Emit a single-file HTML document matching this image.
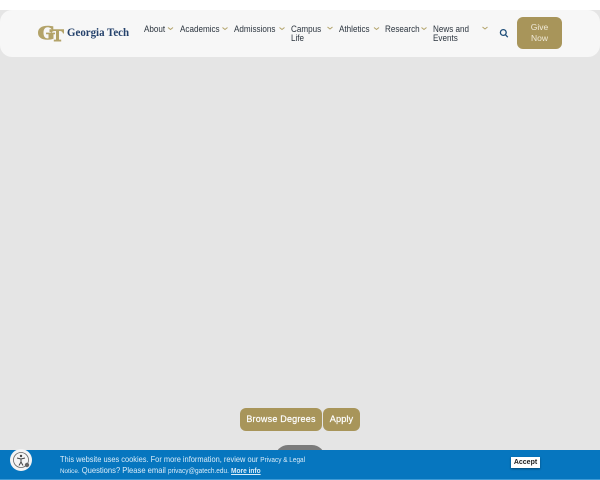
<!DOCTYPE html>
<html><head><meta charset="utf-8">
<style>
html,body{margin:0;padding:0;width:600px;height:480px;overflow:hidden;background:#e5e5e5;font-family:"Liberation Sans",sans-serif}
.a{position:absolute;white-space:nowrap}
#top{left:0;top:0;width:600px;height:10px;background:#fff}
#nav{left:0;top:10px;width:600px;height:47px;background:#f7f7f7;border-radius:12px}
.n{font-size:8.8px;line-height:9px;color:#2a333d;transform:scaleX(.92);transform-origin:left top;filter:blur(.2px)}
.btn{background:#a8955a;color:#fff;border-radius:5px;text-align:center;font-weight:400}
svg{position:absolute;overflow:visible}
</style></head><body>
<div class="a" id="top"></div>
<div class="a" id="nav"></div>

<svg style="left:38px;top:25px;filter:blur(.3px)" width="26" height="17" viewBox="0 0 26 17"><g fill="#b3a369">
<path d="M9.500 0.800C3.500 0.800 0 3.400 0 7.800C0 12.200 3.500 14.800 9.500 14.800C12 14.800 14 14.400 15.500 13.800V9.300H17V7.600H8V9.300H10.500V13.200C10.200 13.400 9.900 13.400 9.500 13.400C7 13.400 5.500 11.400 5.500 7.800C5.500 4.300 7 2.300 9.500 2.300C11.800 2.300 13.300 3.400 14.300 5.400H15.300V1.400C13.800 1.100 11.800 .8 9.500 .8Z"/>
<path d="M11.500 4.200H26V8.500H25C24.500 6.700 23.500 6 21.800 6H21V14.600H23.200V16.500H15.800V14.600H18V6H16.800C15 6 14 6.700 13.500 8H12.800V7H11.500Z"/></g></svg>
<div class="a" style="left:67px;top:25.500px;font-family:'Liberation Serif',serif;font-weight:700;font-size:11.600px;line-height:14px;color:#24416b;transform:scaleX(.94);transform-origin:left top;filter:blur(.2px)">Georgia Tech</div>

<div class="a n" style="left:143.500px;top:24.500px">About</div>
<div class="a n" style="left:179.500px;top:24.500px">Academics</div>
<div class="a n" style="left:234px;top:24.500px">Admissions</div>
<div class="a n" style="left:291px;top:24.500px;line-height:9.500px">Campus<br>Life</div>
<div class="a n" style="left:339px;top:24.500px">Athletics</div>
<div class="a n" style="left:385px;top:24.500px">Research</div>
<div class="a n" style="left:433px;top:24.500px;line-height:9.500px">News and<br>Events</div>

<svg style="left:0;top:0" width="600" height="60"><g fill="none" stroke="#b3a369" stroke-width="1">
<path d="M168 27.500l2.500 2 2.500-2"/><path d="M222.500 27.500l2.500 2 2.500-2"/><path d="M279.500 27.500l2.500 2 2.500-2"/><path d="M327.500 27l2.500 2 2.500-2"/><path d="M374 27.500l2.500 2 2.500-2"/><path d="M421.500 27.500l2.500 2 2.500-2"/><path d="M482.500 27l2.500 2 2.500-2"/></g>
<g fill="none" stroke="#1f4e79" stroke-width="1.300"><circle cx="503.300" cy="32.500" r="2.900"/><path d="M505.400 34.700l2.400 2.500"/></g></svg>

<div class="a btn" style="left:517px;top:17px;width:45px;height:32px;border-radius:6px;font-size:8.500px;line-height:11px;color:#f0ead8;filter:blur(.2px)"><div style="padding-top:5px">Give<br>Now</div></div>

<div class="a btn" style="left:240px;top:408px;width:82px;height:23px;line-height:23px;font-size:9px;letter-spacing:.2px;border-radius:6px;-webkit-text-stroke:.2px #fff">Browse Degrees</div>
<div class="a btn" style="left:323px;top:408px;width:37px;height:23px;line-height:23px;font-size:9.200px;letter-spacing:.1px;border-radius:6px;-webkit-text-stroke:.2px #fff">Apply</div>

<div class="a" style="left:275px;top:445px;width:50px;height:20px;border-radius:13px 13px 0 0;background:#7b7b7b"></div>

<div class="a" style="left:0;top:450px;width:600px;height:29px;background:#0676bf"></div>
<div class="a" style="left:0;top:479px;width:600px;height:1px;background:#3f9bd6"></div>

<div class="a" style="left:60px;top:453.500px;font-size:8.100px;line-height:11px;color:#dbecf8;transform:scaleX(.92);transform-origin:left top;filter:blur(.2px)">This website uses cookies. For more information, review our <span style="font-size:7px">Privacy &amp; Legal</span></div>
<div class="a" style="left:60px;top:464.500px;font-size:8.100px;line-height:11px;color:#dbecf8;transform:scaleX(.94);transform-origin:left top;filter:blur(.2px)"><span style="font-size:6.700px">Notice.</span> Questions? Please email <span style="font-size:6.900px">privacy@gatech.edu.</span> <span style="font-size:7px;font-weight:700;text-decoration:underline">More info</span></div>

<div class="a" style="left:511px;top:457px;width:29px;height:11px;background:#fff;box-shadow:0 1px 2px rgba(0,0,0,.4);color:#222;font-size:7px;font-weight:700;line-height:11px;text-align:center">Accept</div>

<div class="a" style="left:10px;top:449px;width:22px;height:22px;border-radius:50%;background:#f4f4f4"></div>
<svg style="left:10px;top:449px" width="22" height="22" viewBox="0 0 22 22"><circle cx="11" cy="11" r="7.500" fill="none" stroke="#666" stroke-width=".8"/><circle cx="11" cy="7" r="1.200" fill="#444"/><path d="M7 9l4 1 4-1M11 10v3l-2 3.500M11 13l2 3.500" fill="none" stroke="#444" stroke-width="1"/><circle cx="17" cy="16" r="2.200" fill="#666"/></svg>
</body></html>
